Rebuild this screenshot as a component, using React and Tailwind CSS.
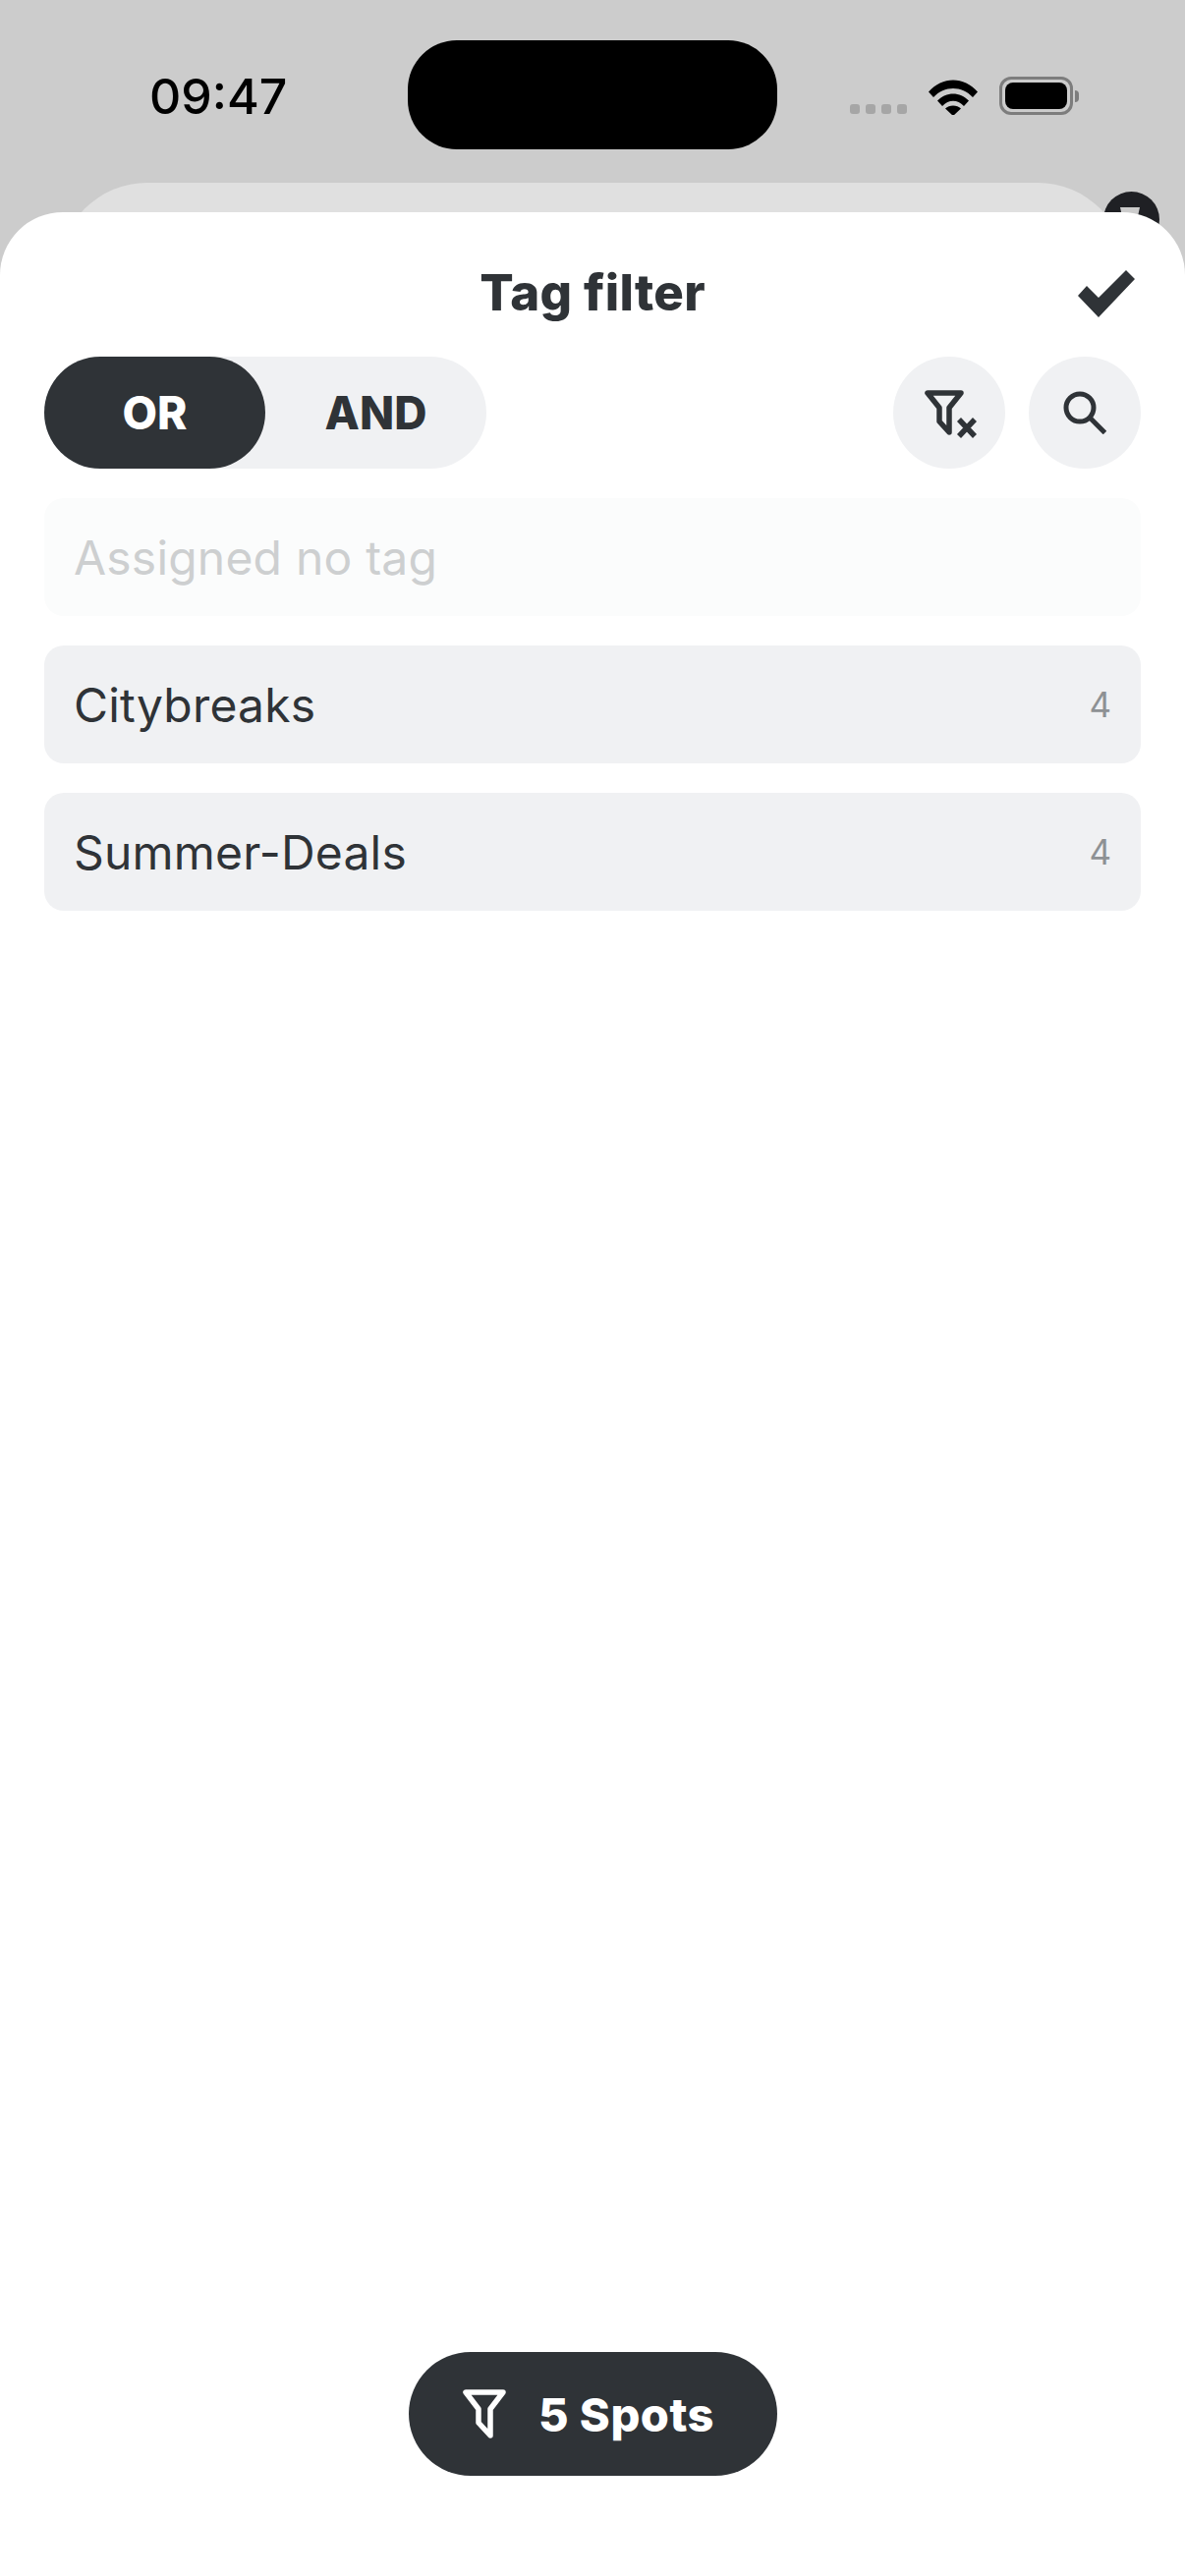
import React from "react";

const FONT = "font-['Inter','Noto_Sans',sans-serif]";

const FunnelIcon = ({ className }) => (
    <svg viewBox="0 0 44 50" className={className} fill="none" stroke="currentColor" strokeWidth="5.5" strokeLinejoin="round" strokeLinecap="round">
        <path d="M3 3H41L28 20V47L16 34V20Z" />
    </svg>
);

const FilterClearIcon = () => (
    <svg viewBox="0 0 54 50" className="w-[54px] h-[50px] text-[#2f3337]" fill="none" stroke="currentColor" strokeWidth="5.5">
        <path d="M3 3H37L25 18V43L15 32V18Z" strokeLinejoin="round" strokeLinecap="round" />
        <path d="M35 30L51 47M51 30L35 47" />
    </svg>
);

const SearchIcon = () => (
    <svg viewBox="0 0 44 44" className="w-[44px] h-[44px] text-[#2f3337]" fill="none" stroke="currentColor" strokeWidth="5">
        <circle cx="17" cy="17" r="14" />
        <path d="M26.5 26.5L42.5 42.5" />
    </svg>
);

const StatusIcons = () => (
    <div className="flex items-end gap-[22px]">
        <div className="flex gap-[6px] mb-[1px]">
            {[0, 1, 2, 3].map((dot) => (
                <span key={dot} className="w-[10px] h-[10px] rounded-[3px] bg-[#a6a6a6]" />
            ))}
        </div>
        <svg viewBox="0 0 50 36" className="w-[50px] h-[36px]">
            <path d="M0 12.5C14 -3.5 36 -3.5 50 12.5L45 18C34 6 16 6 5 18Z" fill="#000" />
            <path d="M9 21.5C18 12 32 12 41 21.5L36 27C29.5 20 20.5 20 14 27Z" fill="#000" />
            <path d="M17 29.5C21 25.5 29 25.5 33 29.5L25 37Z" fill="#000" />
        </svg>
        <div className="flex items-center gap-[2px]">
            <div className="w-[75px] h-[39px] rounded-[12px] border-[3px] border-[#7d7d7d] p-[3px]">
                <div className="w-full h-full rounded-[8px] bg-black" />
            </div>
            <div className="w-[4px] h-[12px] rounded-r-[4px] bg-[#7d7d7d]" />
        </div>
    </div>
);

const TagRow = ({ name, count, muted }) => (
    <div className={`h-[120px] rounded-[20px] flex items-center justify-between px-[30px] ${muted ? "bg-[#fbfcfc]" : "bg-[#f0f1f3]"}`}>
        <span className={`text-[48px] leading-none tracking-[0.2px] pt-[1px] ${muted ? "text-[#cdcfd0]" : "text-[#2f3337]"}`}>{name}</span>
        {count && <span className="text-[35px] leading-none text-[#8e9194]">{count}</span>}
    </div>
);

const App = () => {
    return (
        <div className={`relative w-[1206px] h-[2622px] bg-[#cccccc] overflow-hidden flex flex-col ${FONT}`}>
            {/* Status bar */}
            <div className="h-[216px] shrink-0 relative">
                <div className="absolute left-[60px] top-[186px] w-[1086px] h-[120px] rounded-t-[90px] bg-[#e0e0e0]" />
                <div className="absolute left-[1123px] top-[195px] w-[57px] h-[57px] rounded-full bg-[#1f2024] overflow-hidden">
                    <svg viewBox="0 0 57 57" className="w-[57px] h-[57px]">
                        <path d="M17 16H37L34 30H20Z" fill="#cccccc" />
                    </svg>
                </div>
                <div className="absolute left-[152px] top-[70px] text-[50px] leading-[56px] font-medium text-black">09:47</div>
                <div className="absolute left-[415px] top-[41px] w-[376px] h-[111px] rounded-[50px] bg-black" />
                <div className="absolute left-[865px] top-[78px]">
                    <StatusIcons />
                </div>
            </div>

            {/* Sheet */}
            <div className="relative flex-1 bg-white rounded-t-[64px] flex flex-col px-[45px]">
                <div className="relative h-[147px] flex items-center justify-center">
                    <h1 className="text-[51px] leading-none font-extrabold tracking-[0.3px] text-[#2f3337] mt-[15px]">Tag filter</h1>
                    <svg viewBox="0 0 58 48" className="absolute right-[6px] top-[59px] w-[58px] h-[48px]" fill="#2f3337">
                        <path d="M0 26L9 16L21 28L49 0L58 9L21 48Z" />
                    </svg>
                </div>

                <div className="flex items-center justify-between">
                    <div className="flex w-[450px] h-[114px] rounded-full bg-[#f0f1f3]">
                        <div className="w-[225px] rounded-full bg-[#2f3337] text-white flex items-center justify-center text-[46px] font-extrabold">OR</div>
                        <div className="w-[225px] rounded-full text-[#2f3337] flex items-center justify-center text-[46px] font-extrabold">AND</div>
                    </div>
                    <div className="flex gap-[24px]">
                        <button className="w-[114px] h-[114px] rounded-full bg-[#f0f1f3] flex items-center justify-center pl-[3px] pt-[3px]">
                            <FilterClearIcon />
                        </button>
                        <button className="w-[114px] h-[114px] rounded-full bg-[#f0f1f3] flex items-center justify-center">
                            <SearchIcon />
                        </button>
                    </div>
                </div>

                <div className="flex flex-col gap-[30px] mt-[30px]">
                    <TagRow name="Assigned no tag" muted />
                    <TagRow name="Citybreaks" count="4" />
                    <TagRow name="Summer-Deals" count="4" />
                </div>

                <div className="flex-1" />

                <div className="flex justify-center pb-[102px]">
                    <button className="w-[375px] h-[126px] rounded-full bg-[#2f3337] text-white flex items-center justify-center gap-[33px] pr-[8px]">
                        <FunnelIcon className="w-[44px] h-[50px]" />
                        <span className="text-[47px] leading-none font-extrabold tracking-[0.5px]">5 Spots</span>
                    </button>
                </div>
            </div>
        </div>
    );
};

export default App;
